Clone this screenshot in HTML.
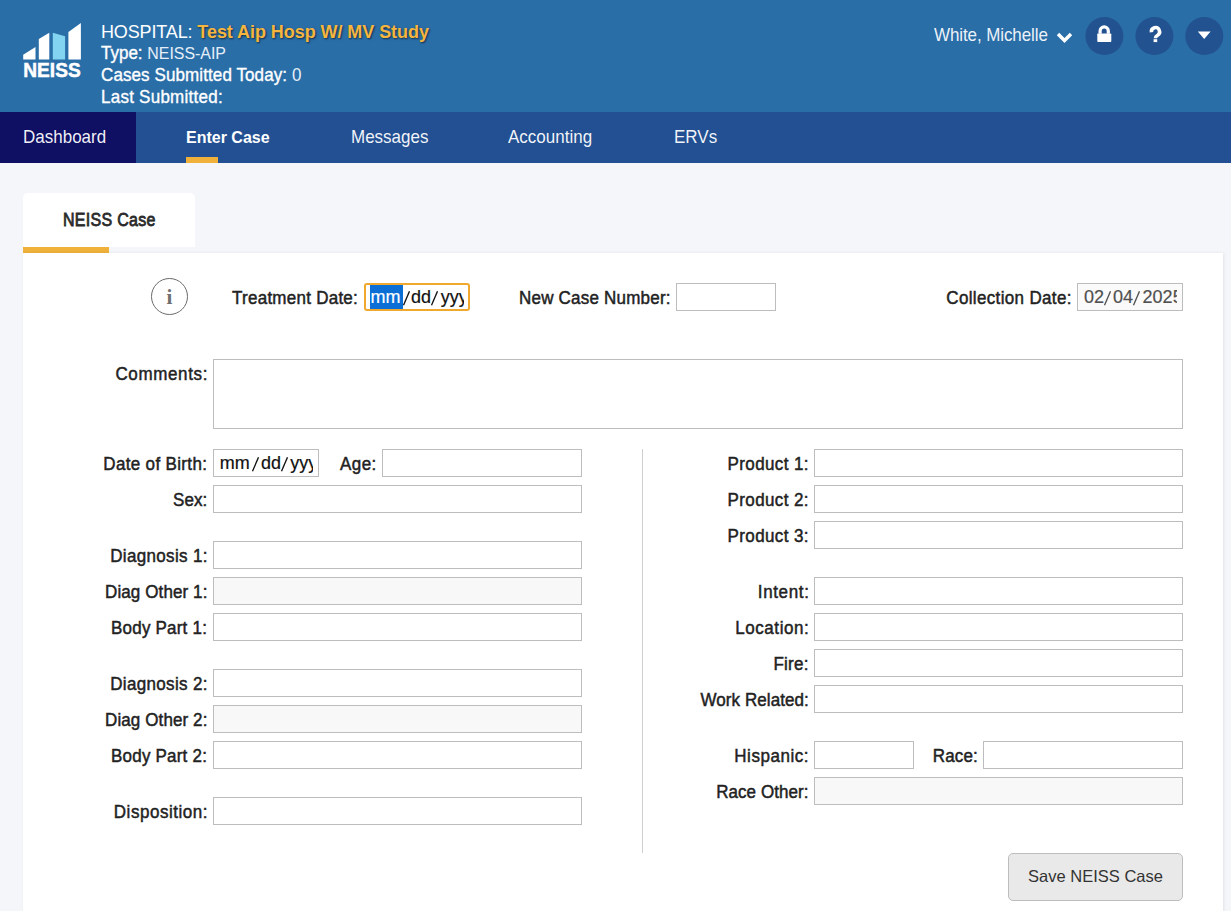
<!DOCTYPE html>
<html><head><meta charset="utf-8">
<style>
*{box-sizing:border-box;margin:0;padding:0}
html,body{width:1231px;height:911px;overflow:hidden;background:#f5f6fa;font-family:"Liberation Sans",sans-serif;position:relative}
.a{position:absolute;white-space:nowrap}
#hdr{position:absolute;left:0;top:0;width:1231px;height:112px;background:#2a6ea8}
#nav{position:absolute;left:0;top:112px;width:1231px;height:51px;background:#225092}
#dash{position:absolute;left:0;top:112px;width:136px;height:51px;background:#0f0f64}
.ht{color:#fff;font-size:17px;line-height:22px;height:22px;transform:scaleY(1.07);transform-origin:0 16.6px}
.lt{color:#e6eef8}
.nv{color:rgba(255,255,255,0.95);font-size:17px;line-height:20px;height:20px;top:128px;transform:scaleY(1.08);transform-origin:0 15.6px}
#tab{position:absolute;left:23px;top:193px;width:172px;height:54px;background:#fff;border-radius:5px 5px 0 0}
#tabul{position:absolute;left:23px;top:247px;width:86px;height:6px;background:#f0b13b}
#panel{position:absolute;left:23px;top:253px;width:1200px;height:700px;background:#fff;box-shadow:1px 0 3px rgba(0,0,0,0.08)}
.lb{position:absolute;white-space:nowrap;font-size:17px;letter-spacing:0.15px;color:#222;-webkit-text-stroke:0.45px #222;line-height:20px;height:20px;text-align:right;transform:scaleY(1.1);transform-origin:50% 15.6px}
.in{position:absolute;height:28px;border:1px solid #bdbdbd;background:#fff}
.dis{background:#f8f8f8}
.ds{position:absolute;top:4px;font-size:18px;line-height:20px;white-space:nowrap;-webkit-text-stroke:0.2px currentColor;transform:scaleY(1.05);transform-origin:50% 15.9px}
</style></head><body>
<div id="hdr"></div>
<!-- logo -->
<svg class="a" style="left:0;top:0" width="100" height="100" viewBox="0 0 100 100">
  <polygon points="23.2,54.8 35.5,46.9 35.5,59.6 23.2,59.6" fill="#fff"/>
  <polygon points="38.8,39 49.3,32.7 49.3,59.6 38.8,59.6" fill="#fff"/>
  <polygon points="52.8,32.7 65.1,36.3 65.1,59.6 52.8,59.6" fill="#82d4f0"/>
  <polygon points="68.4,31.9 80.9,23 80.9,59.6 68.4,59.6" fill="#fff"/>
  <text x="52" y="76.6" text-anchor="middle" font-family="Liberation Sans" font-weight="bold" font-size="19.8" fill="#fff" stroke="#fff" stroke-width="0.5" textLength="57.4" lengthAdjust="spacingAndGlyphs">NEISS</text>
</svg>
<div class="a ht" style="left:101px;top:21px;font-size:18px;transform-origin:0 17px"><span style="letter-spacing:-0.15px">HOSPITAL:</span> <b style="color:#f5b53f;letter-spacing:-0.06px;text-shadow:1px 1px 2px rgba(0,0,0,0.6)">Test Aip Hosp W/ MV Study</b></div>
<div class="a ht" style="left:101px;top:43px"><span style="-webkit-text-stroke:0.35px #fff">Type:</span> <span class="lt" style="font-size:15.9px">NEISS-AIP</span></div>
<div class="a ht" style="left:101px;top:65px"><span style="letter-spacing:0.1px;-webkit-text-stroke:0.35px #fff">Cases Submitted Today:</span> <span class="lt">0</span></div>
<div class="a ht" style="left:101px;top:87px;letter-spacing:0.25px;-webkit-text-stroke:0.35px #fff">Last Submitted:</div>

<div class="a ht" style="left:934px;top:25px;font-size:17px;letter-spacing:-0.1px;color:rgba(255,255,255,0.93)">White, Michelle</div>
<svg class="a" style="left:1055px;top:30px" width="20" height="15" viewBox="0 0 20 15"><polyline points="3,4 9.5,10.5 16,4" fill="none" stroke="#fff" stroke-width="3.4"/></svg>
<svg class="a" style="left:1080px;top:10px" width="151" height="52" viewBox="1080 10 151 52">
  <circle cx="1104.4" cy="36" r="19" fill="#22528f"/>
  <circle cx="1154.4" cy="36" r="19" fill="#22528f"/>
  <circle cx="1204.3" cy="36" r="19" fill="#22528f"/>
  <path d="M1100.1,33.8 V31 A4.1,4.1 0 0 1 1108.3,31 V33.8" fill="none" stroke="#fff" stroke-width="3.2"/>
  <rect x="1097.3" y="33.4" width="14" height="8.7" rx="0.8" fill="#fff"/>
  <path d="M1151.4,32.2 A4.1,4.1 0 1 1 1157.6,35.2 Q1155.4,36.4 1155.4,38.2" fill="none" stroke="#fff" stroke-width="3.5"/>
  <rect x="1153.6" y="39.2" width="3.6" height="2.9" fill="#fff"/>
  <polygon points="1197.8,31.6 1210.6,31.6 1204.2,39" fill="#fff"/>
</svg>

<div id="nav"></div>
<div id="dash"></div>
<div class="a nv" style="left:23px">Dashboard</div>
<div class="a nv" style="left:186px;font-weight:bold;font-size:16px;color:#fff">Enter Case</div>
<div class="a" style="left:186px;top:157px;width:32px;height:6px;background:#f0b13b"></div>
<div class="a nv" style="left:351px">Messages</div>
<div class="a nv" style="left:508px">Accounting</div>
<div class="a nv" style="left:674px">ERVs</div>

<div id="tab"></div>
<div id="tabul"></div>
<div id="panel"></div>
<div class="a lb" style="left:63px;top:210.5px;font-size:16px;letter-spacing:0.3px;color:#2a2a2a;-webkit-text-stroke:0.7px #2a2a2a;transform:scaleY(1.12)">NEISS Case</div>

<!--FORM-->
<div class="lb" style="left:232.05px;top:289px;letter-spacing:0.253px;text-align:left">Treatment Date:</div>
<div class="in" style="left:364px;top:283px;width:106px;height:28px;border:2px solid #f0a92e;border-radius:3px;background:#fff;overflow:hidden"><div style="position:absolute;left:-2px;top:-2px"><div style="position:absolute;left:0;top:0;width:100px;height:26px;overflow:hidden"><div style="position:absolute;left:6px;top:2px;width:33px;height:24px;background:#0b6fd6"></div><span class="ds" style="left:6.3999999999999995px;color:#fff">mm</span><svg style="position:absolute;left:37.699999999999996px;top:6px" width="9" height="18" viewBox="0 0 9 18"><line x1="1.5" y1="16.2" x2="7.5" y2="2.3" stroke="#111" stroke-width="1.35"/></svg><span class="ds" style="left:47.0px;color:#111">dd</span><svg style="position:absolute;left:65.7px;top:6px" width="9" height="18" viewBox="0 0 9 18"><line x1="1.5" y1="16.2" x2="7.5" y2="2.3" stroke="#111" stroke-width="1.35"/></svg><span class="ds" style="left:76.7px;color:#111">yyyy</span></div></div></div>
<div class="lb" style="left:519.00px;top:289px;letter-spacing:0.214px;text-align:left">New Case Number:</div>
<div class="in" style="left:676px;top:283px;width:100px;height:28px"></div>
<div class="lb" style="left:946.30px;top:289px;letter-spacing:0.34px;text-align:left">Collection Date:</div>
<div class="in" style="left:1077px;top:283px;width:106px;height:28px;background:#fafafa;overflow:hidden"><div style="position:absolute;left:-1px;top:-1px"><div style="position:absolute;left:0;top:0;width:100px;height:26px;overflow:hidden"><span class="ds" style="left:7.0px;color:#505050">02</span><svg style="position:absolute;left:26.099999999999998px;top:6px" width="9" height="18" viewBox="0 0 9 18"><line x1="1.5" y1="16.2" x2="7.5" y2="2.3" stroke="#505050" stroke-width="1.35"/></svg><span class="ds" style="left:36.0px;color:#505050">04</span><svg style="position:absolute;left:55.3px;top:6px" width="9" height="18" viewBox="0 0 9 18"><line x1="1.5" y1="16.2" x2="7.5" y2="2.3" stroke="#505050" stroke-width="1.35"/></svg><span class="ds" style="left:65.60000000000001px;color:#505050">2025</span></div></div></div>
<div class="a" style="left:151px;top:278px;width:37px;height:37px;border:1px solid #6b6b6b;border-radius:50%;text-align:center;font-family:'Liberation Serif',serif;font-weight:bold;font-size:21px;line-height:37px;color:#707070">i</div>
<div class="lb" style="left:115.40px;top:365px;letter-spacing:0.636px;text-align:left">Comments:</div>
<div class="in" style="left:213px;top:359px;width:970px;height:70px"></div>
<div class="lb" style="left:103.30px;top:455px;letter-spacing:0.339px;text-align:left">Date of Birth:</div>
<div class="in" style="left:213px;top:449px;width:106px;height:28px;background:#fff;overflow:hidden"><div style="position:absolute;left:-1px;top:-1px"><div style="position:absolute;left:0;top:0;width:100px;height:26px;overflow:hidden"><span class="ds" style="left:6.8px;color:#111">mm</span><svg style="position:absolute;left:37.9px;top:6px" width="9" height="18" viewBox="0 0 9 18"><line x1="1.5" y1="16.2" x2="7.5" y2="2.3" stroke="#111" stroke-width="1.35"/></svg><span class="ds" style="left:48.1px;color:#111">dd</span><svg style="position:absolute;left:67.4px;top:6px" width="9" height="18" viewBox="0 0 9 18"><line x1="1.5" y1="16.2" x2="7.5" y2="2.3" stroke="#111" stroke-width="1.35"/></svg><span class="ds" style="left:77.30000000000001px;color:#111">yyyy</span></div></div></div>
<div class="lb" style="left:340.00px;top:455px;letter-spacing:0.433px;text-align:left">Age:</div>
<div class="in" style="left:382px;top:449px;width:200px;height:28px"></div>
<div class="lb" style="left:173.00px;top:491px;letter-spacing:0.099px;text-align:left">Sex:</div>
<div class="in" style="left:213px;top:485px;width:369px;height:28px"></div>
<div class="lb" style="left:110.20px;top:547px;letter-spacing:0.337px;text-align:left">Diagnosis 1:</div>
<div class="in" style="left:213px;top:541px;width:369px;height:28px"></div>
<div class="lb" style="left:105.00px;top:583px;letter-spacing:0.108px;text-align:left">Diag Other 1:</div>
<div class="in dis" style="left:213px;top:577px;width:369px;height:28px"></div>
<div class="lb" style="left:111.00px;top:619px;letter-spacing:0.209px;text-align:left">Body Part 1:</div>
<div class="in" style="left:213px;top:613px;width:369px;height:28px"></div>
<div class="lb" style="left:110.20px;top:675px;letter-spacing:0.337px;text-align:left">Diagnosis 2:</div>
<div class="in" style="left:213px;top:669px;width:369px;height:28px"></div>
<div class="lb" style="left:105.00px;top:711px;letter-spacing:0.108px;text-align:left">Diag Other 2:</div>
<div class="in dis" style="left:213px;top:705px;width:369px;height:28px"></div>
<div class="lb" style="left:111.00px;top:747px;letter-spacing:0.209px;text-align:left">Body Part 2:</div>
<div class="in" style="left:213px;top:741px;width:369px;height:28px"></div>
<div class="lb" style="left:113.80px;top:803px;letter-spacing:0.536px;text-align:left">Disposition:</div>
<div class="in" style="left:213px;top:797px;width:369px;height:28px"></div>
<div class="lb" style="left:727.60px;top:455px;letter-spacing:0.378px;text-align:left">Product 1:</div>
<div class="in" style="left:814px;top:449px;width:369px;height:28px"></div>
<div class="lb" style="left:727.60px;top:491px;letter-spacing:0.378px;text-align:left">Product 2:</div>
<div class="in" style="left:814px;top:485px;width:369px;height:28px"></div>
<div class="lb" style="left:727.60px;top:527px;letter-spacing:0.378px;text-align:left">Product 3:</div>
<div class="in" style="left:814px;top:521px;width:369px;height:28px"></div>
<div class="lb" style="left:757.80px;top:583px;letter-spacing:0.633px;text-align:left">Intent:</div>
<div class="in" style="left:814px;top:577px;width:369px;height:28px"></div>
<div class="lb" style="left:735.20px;top:619px;letter-spacing:0.575px;text-align:left">Location:</div>
<div class="in" style="left:814px;top:613px;width:369px;height:28px"></div>
<div class="lb" style="left:773.40px;top:655px;letter-spacing:0.25px;text-align:left">Fire:</div>
<div class="in" style="left:814px;top:649px;width:369px;height:28px"></div>
<div class="lb" style="left:700.40px;top:691px;letter-spacing:0.083px;text-align:left">Work Related:</div>
<div class="in" style="left:814px;top:685px;width:369px;height:28px"></div>
<div class="lb" style="left:716.20px;top:783px;letter-spacing:0.06px;text-align:left">Race Other:</div>
<div class="in dis" style="left:814px;top:777px;width:369px;height:28px"></div>
<div class="lb" style="left:734.30px;top:747px;letter-spacing:0.539px;text-align:left">Hispanic:</div>
<div class="in" style="left:814px;top:741px;width:100px;height:28px"></div>
<div class="lb" style="left:932.80px;top:747px;letter-spacing:0.125px;text-align:left">Race:</div>
<div class="in" style="left:983px;top:741px;width:200px;height:28px"></div>
<div class="a" style="left:642px;top:449px;width:1px;height:404px;background:#cfcfcf"></div>
<div class="a" style="left:1008px;top:853px;width:175px;height:48px;border:1px solid #bdbdbd;border-radius:5px;background:#e9e9e9;color:#333;font-size:16.5px;text-align:center;line-height:45px"><span style="display:inline-block;transform:scaleY(1.05)">Save NEISS Case</span></div>
<!--/FORM-->
</body></html>
